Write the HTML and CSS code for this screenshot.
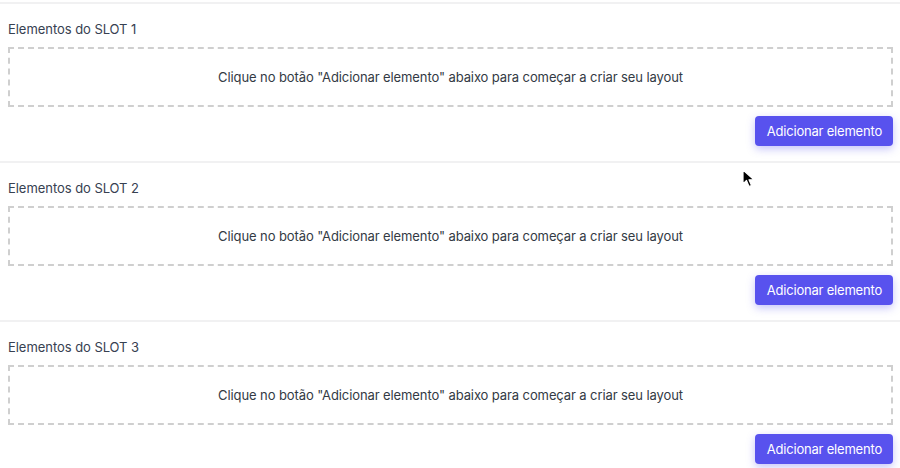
FILE: index.html
```html
<!DOCTYPE html>
<html lang="pt">
<head>
<meta charset="utf-8">
<link rel="stylesheet" href="styles.css">
</head>
<body>
<div class="slots">
  <section class="slot">
    <h3 class="slot-title">Elementos do SLOT 1</h3>
    <div class="dropzone">Clique no botão "Adicionar elemento" abaixo para começar a criar seu layout</div>
    <div class="actions"><button class="btn">Adicionar elemento</button></div>
  </section>
  <section class="slot">
    <h3 class="slot-title">Elementos do SLOT 2</h3>
    <div class="dropzone">Clique no botão "Adicionar elemento" abaixo para começar a criar seu layout</div>
    <div class="actions"><button class="btn">Adicionar elemento</button></div>
  </section>
  <section class="slot">
    <h3 class="slot-title">Elementos do SLOT 3</h3>
    <div class="dropzone">Clique no botão "Adicionar elemento" abaixo para começar a criar seu layout</div>
    <div class="actions"><button class="btn">Adicionar elemento</button></div>
  </section>
</div>
<svg class="cursor" width="14" height="20" viewBox="0 0 14 20"><path d="M1 1 L1 15 L4.5 11.5 L7 17.5 L9.5 16.5 L7 10.8 L12 10.8 Z" fill="#000" stroke="#fff" stroke-width="1.2" stroke-linejoin="round"/></svg>
</body>
</html>
```
FILE: styles.css
```css
html, body {
  margin: 0;
  padding: 0;
  background: #ffffff;
}
body {
  font-family: Inter, "Helvetica Neue", Arial, sans-serif;
  color: #374151;
  padding-top: 2px;
  position: relative;
  overflow: hidden;
  height: 468px;
}
.slot {
  border-top: 2px solid #f1f1f2;
  padding: 15px 7px 15px 8px;
  background: #fff;
}
.slot-title {
  margin: 0 0 8px 0;
  font-size: 13px;
  font-weight: 400;
  line-height: 20px;
  letter-spacing: -0.05px;
  color: #374151;
}
.dropzone {
  height: 56px;
  border: 2px dashed #cfcfcf;
  display: flex;
  align-items: center;
  justify-content: center;
  font-size: 13px;
  letter-spacing: -0.1px;
  color: #333a44;
}
.actions {
  display: flex;
  justify-content: flex-end;
  margin-top: 9px;
}
.btn {
  font-family: inherit;
  font-size: 13px;
  letter-spacing: -0.2px;
  color: #fff;
  background: #5852ee;
  border: none;
  border-radius: 4px;
  height: 30px;
  padding: 0 11px 0 12px;
  box-shadow: 0 3px 8px rgba(88, 82, 238, 0.35);
  cursor: pointer;
}
.cursor {
  position: absolute;
  left: 742px;
  top: 169px;
}
```
